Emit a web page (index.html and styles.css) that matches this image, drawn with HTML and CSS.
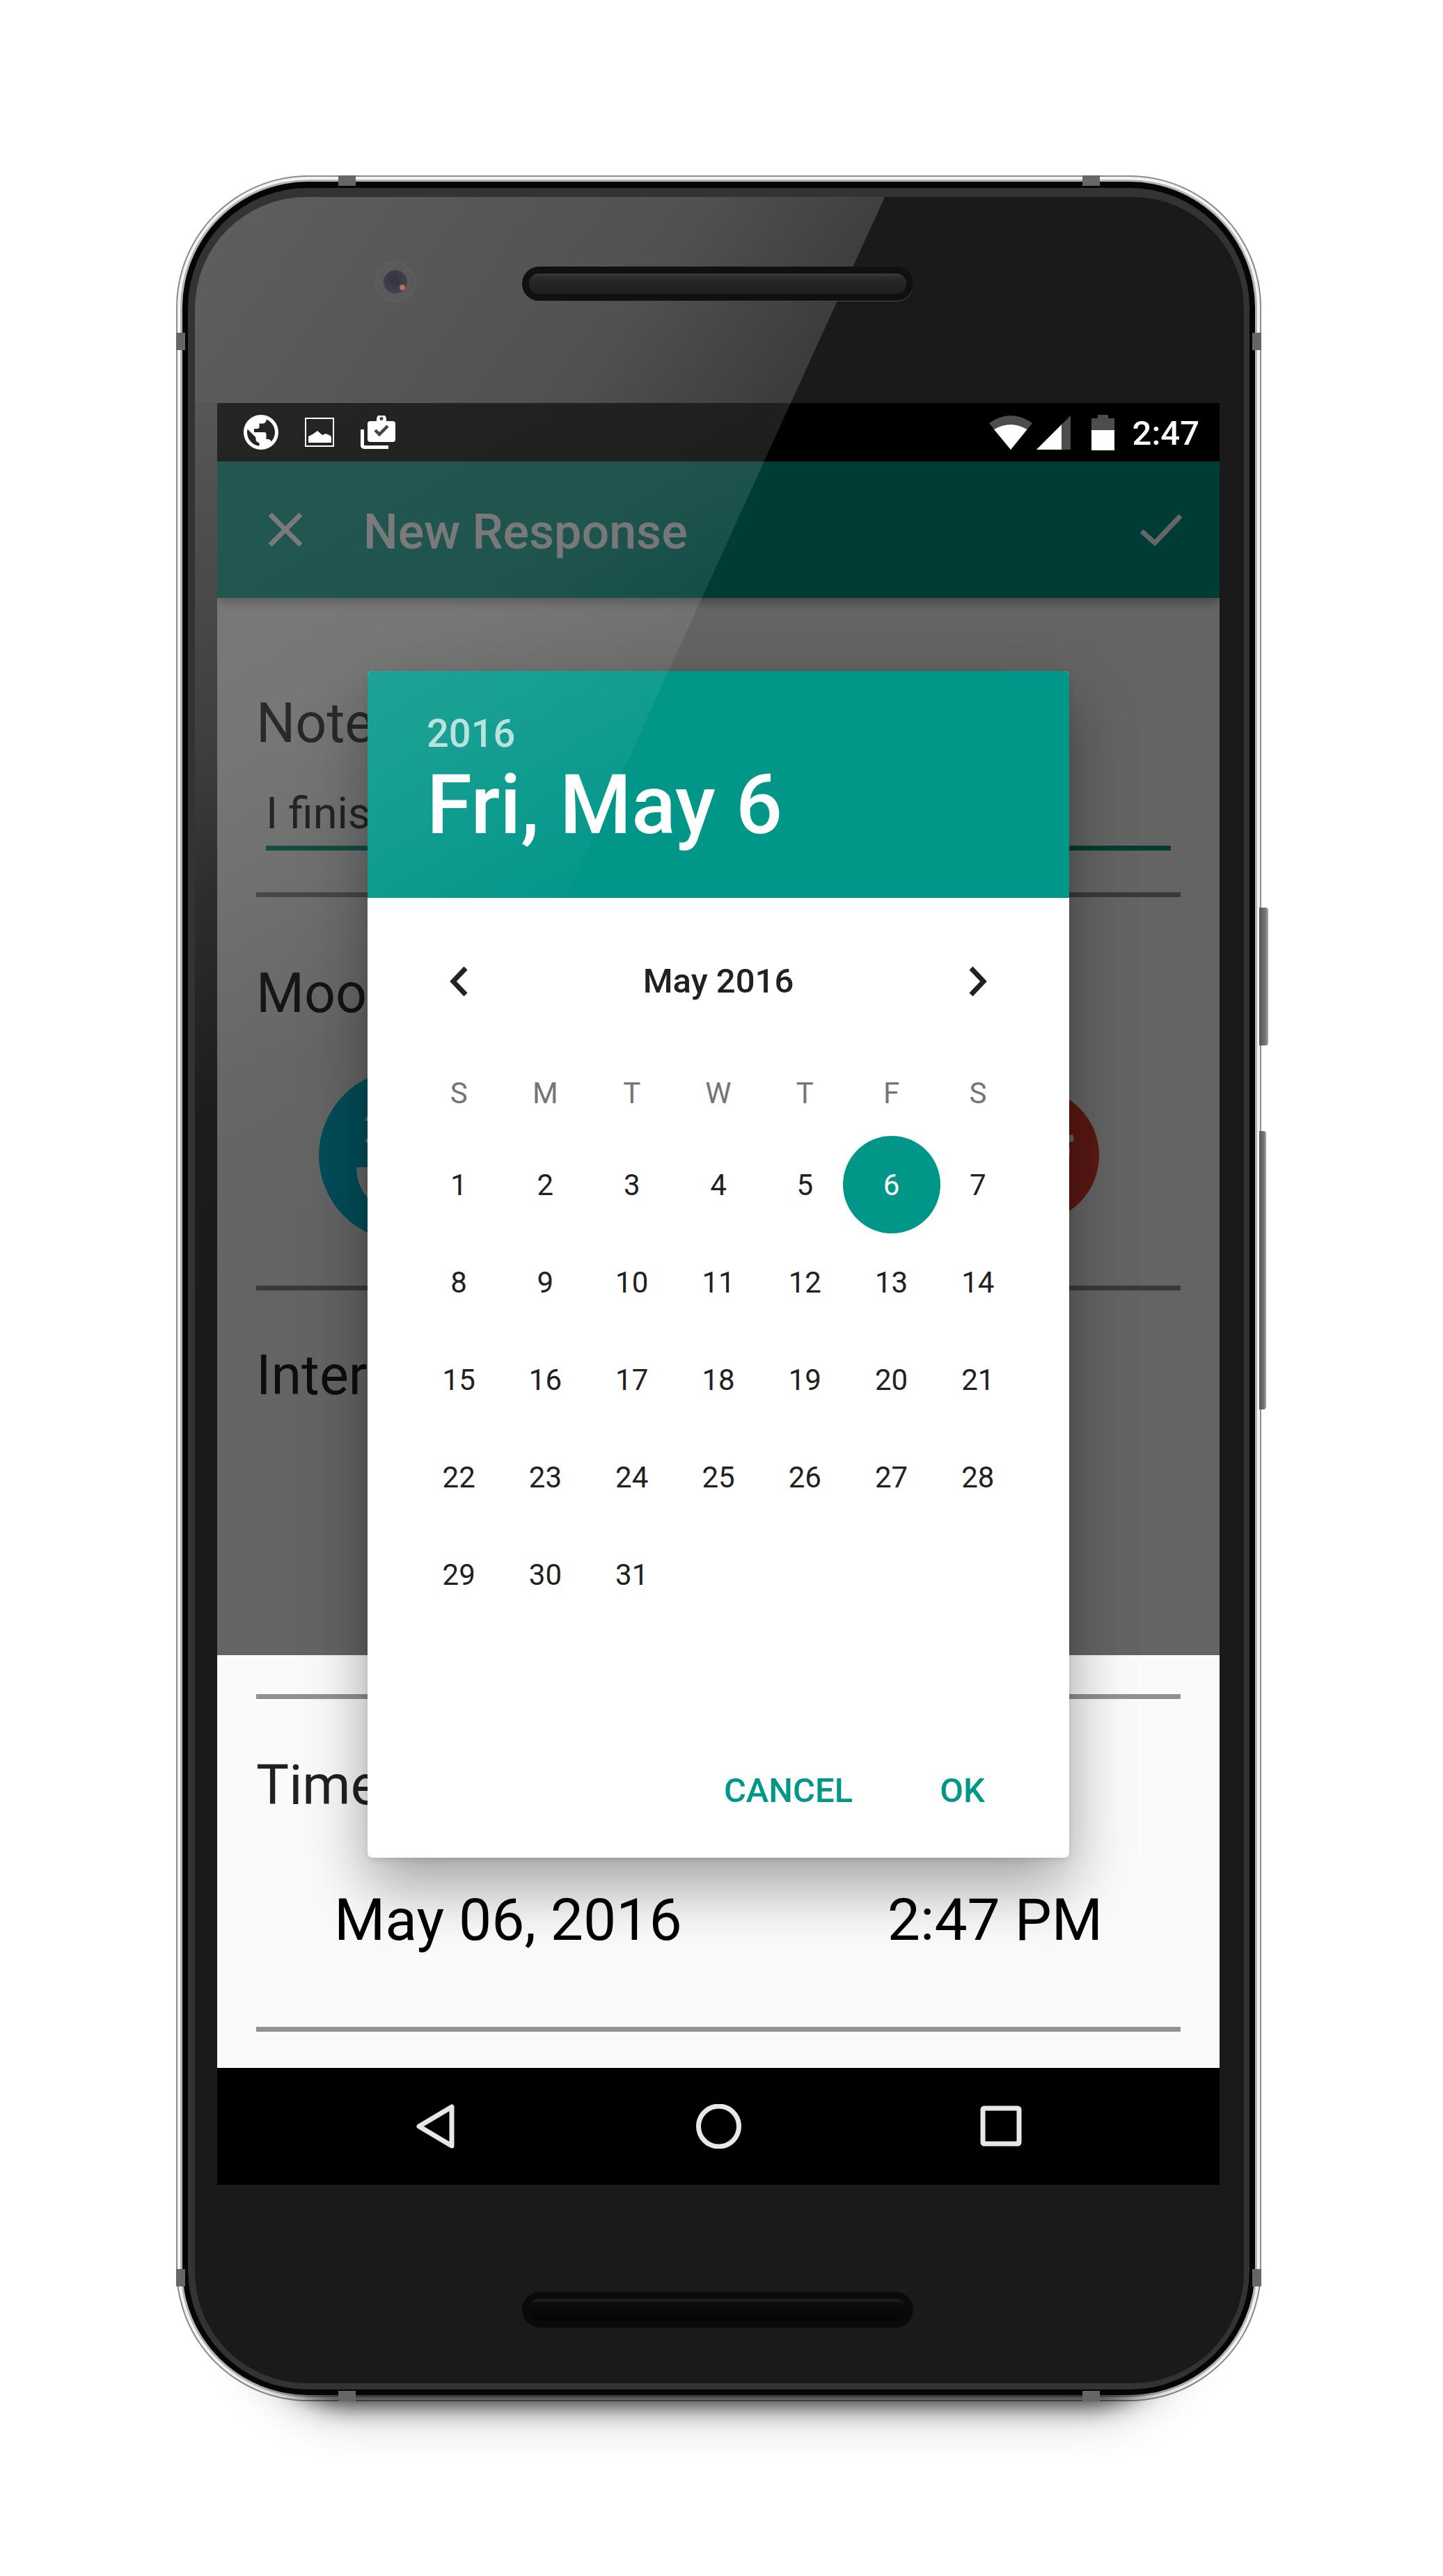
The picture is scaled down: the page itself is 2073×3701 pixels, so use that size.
FILE: index.html
```html
<!DOCTYPE html>
<html lang="en">
<head>
  <meta charset="UTF-8">
  <title>New Response</title>
  <link rel="stylesheet" href="styles.css">
</head>
<body>

  <div class="phone">
    <div class="phone-shadow"></div>
    <div class="btn-power"></div>
    <div class="btn-volume"></div>
    <div class="band band-top band-l"></div>
    <div class="band band-top band-r"></div>
    <div class="band band-bottom band-l"></div>
    <div class="band band-bottom band-r"></div>
    <div class="band-side band-side-top band-l2"></div>
    <div class="band-side band-side-top band-r2"></div>
    <div class="band-side band-side-bottom band-l2"></div>
    <div class="band-side band-side-bottom band-r2"></div>

    <div class="rim">
      <div class="edge">
        <div class="glass">
          <div class="wash-glass"></div>
          <div class="wash-strip"></div>
          <div class="camera"><div class="lens"><div class="glint"></div></div></div>
          <div class="speaker speaker-top"><div class="slot"></div></div>

          <div class="screen">
            <div class="statusbar">
              <div class="status-left">
                <svg class="ic-globe" viewBox="0 0 24 24"><path fill="#fff" d="M12 2C6.48 2 2 6.48 2 12s4.48 10 10 10 10-4.48 10-10S17.52 2 12 2zm-1 17.93c-3.95-.49-7-3.85-7-7.93 0-.62.08-1.21.21-1.79L9 15v1c0 1.1.9 2 2 2v1.93zm6.9-2.54c-.26-.81-1-1.39-1.9-1.39h-1v-3c0-.55-.45-1-1-1H8v-2h2c.55 0 1-.45 1-1V7h2c1.1 0 2-.9 2-2v-.41c2.93 1.19 5 4.06 5 7.41 0 2.08-.8 3.97-2.1 5.39z"/></svg>
                <svg class="ic-image" viewBox="0 0 42 42"><rect x="1" y="1" width="40" height="40" fill="none" stroke="#fff" stroke-width="2"/><path fill="#fff" d="M5 36V27l6-3 7-5 7 6 5-2 7 3 1 3v7z"/></svg>
                <svg class="ic-case" viewBox="0 0 50 48">
                  <path fill="none" stroke="#fff" stroke-width="5" d="M2.5 20v23a2.5 2.5 0 0 0 2.5 2.5h35"/>
                  <path fill="#fff" d="M23 8V5a6 6 0 0 1 14 0v3h9a4 4 0 0 1 4 4v22a4 4 0 0 1-4 4H14a4 4 0 0 1-4-4V12a4 4 0 0 1 4-4z"/>
                  <circle cx="30" cy="4.5" r="2.5" fill="#262626"/>
                  <path fill="none" stroke="#262626" stroke-width="4.5" d="M21 21l6 6 12-12"/>
                </svg>
              </div>
              <div class="status-right">
                <svg class="ic-wifi" viewBox="0 0 62 49"><path fill="#4d4d4d" d="M0 11Q31-11 62 11L31 49z"/><path fill="#fff" d="M7 20Q31 6 54.500 20L31 49z"/></svg>
                <svg class="ic-signal" viewBox="0 0 49 49"><path fill="#4d4d4d" d="M0 49L49 0v49z"/><path fill="#fff" d="M0 49L36 13v36z"/></svg>
                <svg class="ic-battery" viewBox="0 0 33 51"><path fill="#4d4d4d" d="M9 0h15v5h9v17H0V5h9z"/><path fill="#fff" d="M0 22h33v29H0z"/></svg>
                <span class="clock">2:47</span>
              </div>
            </div>

            <div class="appbar">
              <svg class="ic-close" viewBox="0 0 48 48"><path fill="none" stroke="#fff" stroke-width="7" d="M2 2l44 44M46 2L2 46"/></svg>
              <span class="appbar-title">New Response</span>
              <svg class="ic-done" viewBox="0 0 61 46"><path fill="none" stroke="#fff" stroke-width="7" d="M2 25l19 17L58 3"/></svg>
            </div>

            <div class="form">
              <div class="label label-note">Note</div>
              <div class="input-text">I finis</div>
              <div class="input-line"></div>
              <div class="rule rule-1"></div>

              <div class="label label-mood">Mood</div>
              <div class="moods">
                <svg class="mood-happy" viewBox="0 0 246 246">
                  <circle cx="123" cy="123" r="123" fill="#00bedc"/>
                  <path fill="#fff" d="M54 140h138a69 69 0 0 1-138 0z"/>
                  <path fill="#fff" d="M72 62l-6 11 6 1zM72 98l-6 2 6 9z"/>
                </svg>
                <svg class="mood-sad" viewBox="0 0 192 192">
                  <circle cx="96" cy="96" r="96" fill="#e03c2e"/>
                  <path fill="#fff" d="M145 68l9-2 2 9-11 3zM145 86h5v7h-5z"/>
                </svg>
              </div>
              <div class="rule rule-2"></div>

              <div class="label label-inter">Inter</div>
              <div class="rule rule-3"></div>

              <div class="label label-time">Time</div>
              <div class="datetime">
                <span>May 06, 2016</span>
                <span>2:47 PM</span>
              </div>
              <div class="rule rule-4"></div>
            </div>

            <div class="navbar">
              <svg class="ic-nav" viewBox="0 0 65 64"><path fill="none" stroke="#e8e8e8" stroke-width="7" stroke-linejoin="round" d="M53 4v56L6 32z"/></svg>
              <svg class="ic-nav" viewBox="0 0 65 64"><circle cx="32.500" cy="32" r="29" fill="none" stroke="#e8e8e8" stroke-width="7"/></svg>
              <svg class="ic-nav ic-nav-square" viewBox="0 0 65 64"><rect x="6" y="6" width="52" height="51" rx="2" fill="none" stroke="#e8e8e8" stroke-width="7"/></svg>
            </div>

            <div class="scrim"></div>

            <div class="dialog">
              <div class="dialog-head">
                <div class="head-year">2016</div>
                <div class="head-date">Fri, May 6</div>
              </div>
              <div class="cal">
                <div class="cal-month">
                  <svg class="chevron" viewBox="0 0 30 44"><path fill="none" stroke="#212121" stroke-width="7" d="M25 3L7 22l18 19"/></svg>
                  <span class="month-name">May 2016</span>
                  <svg class="chevron" viewBox="0 0 30 44"><path fill="none" stroke="#212121" stroke-width="7" d="M5 3l18 19L5 41"/></svg>
                </div>
                <div class="cal-week">
                  <span>S</span><span>M</span><span>T</span><span>W</span><span>T</span><span>F</span><span>S</span>
                </div>
                <div class="cal-days">
                  <span class="day">1</span><span class="day">2</span><span class="day">3</span><span class="day">4</span><span class="day">5</span><span class="day"><b class="day-on">6</b></span><span class="day">7</span>
                  <span class="day">8</span><span class="day">9</span><span class="day">10</span><span class="day">11</span><span class="day">12</span><span class="day">13</span><span class="day">14</span>
                  <span class="day">15</span><span class="day">16</span><span class="day">17</span><span class="day">18</span><span class="day">19</span><span class="day">20</span><span class="day">21</span>
                  <span class="day">22</span><span class="day">23</span><span class="day">24</span><span class="day">25</span><span class="day">26</span><span class="day">27</span><span class="day">28</span>
                  <span class="day">29</span><span class="day">30</span><span class="day">31</span>
                </div>
              </div>
              <div class="dialog-actions">
                <span>CANCEL</span>
                <span>OK</span>
              </div>
            </div>
          </div>

          <div class="speaker speaker-bottom"><div class="slot"></div></div>
          <div class="wash-screen"></div>
        </div>
      </div>
    </div>
  </div>

</body>
</html>
```

FILE: styles.css
```css
body {
  margin: 0;
  height: 3701px;
  overflow: hidden;
  background: #fff;
  font-family: Roboto, "Liberation Sans", sans-serif;
}

/* device */
.phone {
  position: relative;
  isolation: isolate;
  width: 1559px;
  height: 3198px;
  margin: 0 0 0 253px;
  top: 252px;
  border-radius: 190px;
  background: #b5b5b5;
  box-shadow: inset 0 0 0 2px #8c8c8c, inset 0 0 0 6px #f4f4f4;
  padding: 9px;
  box-sizing: border-box;
}
.phone-shadow {
  position: absolute;
  z-index: -1;
  left: 130px;
  right: 130px;
  bottom: 12px;
  height: 240px;
  border-radius: 120px;
  background: #000;
  box-shadow: 0 6px 34px 12px rgba(0,0,0,0.8), 0 4px 60px 44px rgba(0,0,0,0.13);
}
.rim {
  height: 100%;
  border-radius: 181px;
  background: #050505;
  padding: 9px 8px 8px 8px;
  box-sizing: border-box;
}
.edge {
  height: 100%;
  border-radius: 172px;
  background: #333;
  padding: 13px 8px 9px 10px;
  box-sizing: border-box;
}
.glass {
  position: relative;
  height: 100%;
  border-radius: 160px;
  background: #1a1a1a;
  overflow: hidden;
}
.wash-glass, .wash-screen {
  position: absolute;
  top: 0;
  left: 0;
  width: 1000px;
  height: 2180px;
}
.wash-glass {
  background: linear-gradient(125deg, rgba(255,255,255,0.3) 0, rgba(255,255,255,0.24) 600px, rgba(255,255,255,0.14) 880px);
  clip-path: polygon(0 0, 991px 0, 856px 296px, 0 296px);
}
.wash-strip {
  position: absolute;
  top: 296px;
  left: 0;
  width: 32px;
  height: 700px;
  background: linear-gradient(rgba(255,255,255,0.14), rgba(255,255,255,0));
}
.wash-screen {
  background: linear-gradient(150deg, rgba(255,255,255,0.16) 0, rgba(255,255,255,0.12) 700px, rgba(255,255,255,0.09) 850px, rgba(255,255,255,0.05) 1000px, rgba(255,255,255,0.01) 1150px, rgba(255,255,255,0) 1400px);
  clip-path: polygon(0 296px, 856px 296px, 35px 2097px, 0 2174px);
}
.camera {
  position: absolute;
  left: 259px;
  top: 93px;
  width: 58px;
  height: 58px;
  border-radius: 50%;
  background: #5a5a5a;
  border: 1px solid #666;
  box-sizing: border-box;
  display: flex;
  align-items: center;
  justify-content: center;
}
.lens {
  position: relative;
  width: 34px;
  height: 34px;
  border-radius: 50%;
  background: radial-gradient(circle at 45% 40%, #33313f 0, #45424f 70%, #5f5c66 100%);
}
.glint {
  position: absolute;
  right: 3px;
  bottom: 5px;
  width: 8px;
  height: 8px;
  border-radius: 50%;
  background: #b5705f;
}
.speaker {
  position: relative;
  width: 562px;
  margin-left: 470px;
  background: #101010;
  border-radius: 26px;
  box-sizing: border-box;
  padding: 10px;
  box-shadow: 0 1px 0 #4a4a4a;
}
.speaker-top {
  height: 49px;
  margin-top: 100px;
}
.speaker-bottom {
  height: 51px;
  margin-top: 154px;
  background: #0a0a0a;
  box-shadow: none;
}
.slot {
  height: 100%;
  border-radius: 14px;
  background: linear-gradient(#3c3c3c 0, #2a2a2a 20%, #1e1e1e 100%);
}
.speaker-bottom .slot {
  background: linear-gradient(#242424 0, #0c0c0c 20%, #050505 100%);
}

/* side buttons and antenna bands */
.btn-power, .btn-volume {
  position: absolute;
  z-index: -1;
  background: linear-gradient(90deg, #555, #777 70%, #aaa);
  border-radius: 0 4px 4px 0;
}
.btn-power {
  left: 1556px;
  top: 1052px;
  width: 13px;
  height: 198px;
}
.btn-volume {
  left: 1556px;
  top: 1373px;
  width: 10px;
  height: 400px;
}
.band, .band-side {
  position: absolute;
  z-index: 1;
  background: #666;
}
.band {
  width: 25px;
  height: 15px;
}
.band-top { top: 0; }
.band-bottom { bottom: 0; }
.band-l { left: 233px; }
.band-r { right: 232px; }
.band-side {
  width: 13px;
  height: 25px;
}
.band-side-top { top: 226px; }
.band-side-bottom { bottom: 165px; }
.band-l2 { left: 0; }
.band-r2 { right: 0; }

/* screen */
.screen {
  position: relative;
  display: flex;
  flex-direction: column;
  width: 1440px;
  height: 2560px;
  margin: 147px 0 0 32px;
  background: #fafafa;
  overflow: hidden;
}
.statusbar {
  display: flex;
  justify-content: space-between;
  align-items: center;
  height: 84px;
  padding: 0 29px 0 33px;
  background: #000;
  flex: none;
}
.status-left, .status-right {
  display: flex;
  align-items: center;
}
.ic-globe { width: 60px; height: 60px; }
.ic-image { width: 42px; height: 42px; margin-left: 33px; }
.ic-case { width: 50px; height: 48px; margin-left: 38px; }
.ic-wifi { width: 62px; height: 49px; }
.ic-signal { width: 49px; height: 49px; margin-left: 6px; }
.ic-battery { width: 33px; height: 51px; margin-left: 30px; }
.clock {
  margin-left: 26px;
  padding-top: 3px;
  color: #fff;
  font-size: 49px;
  line-height: 60px;
  font-weight: 500;
}

.appbar {
  display: flex;
  align-items: center;
  height: 196px;
  padding: 0 53px 0 74px;
  background: #009688;
  box-shadow: 0 6px 14px rgba(0,0,0,0.3);
  flex: none;
  position: relative;
}
.ic-close { width: 48px; height: 48px; }
.appbar-title {
  margin-left: 88px;
  color: #fff;
  font-size: 70px;
  line-height: 84px;
  font-weight: 500;
  padding-top: 6px;
  flex: 1;
}
.ic-done { width: 61px; height: 46px; }

.form {
  flex: 1;
  padding: 0 56px;
}
.label {
  color: #212121;
  font-size: 79px;
  line-height: 100px;
}
.label-note { margin-top: 130px; }
.label-mood { margin-top: 88px; }
.label-inter { margin-top: 72px; }
.label-time { margin-top: 74px; }
.input-text {
  margin: 38px 0 0 14px;
  color: #212121;
  font-size: 63px;
  line-height: 84px;
}
.input-line {
  height: 7px;
  margin: 4px 14px 0 14px;
  background: #009688;
}
.rule {
  height: 7px;
  background: #919191;
}
.rule-1 { margin-top: 60px; }
.rule-2 { margin-top: 64px; }
.rule-3 { margin-top: 408px; }
.rule-4 { margin-top: 98px; }
.moods {
  display: flex;
  justify-content: space-between;
  align-items: center;
  height: 246px;
  margin: 60px 117px 0 90px;
}
.mood-happy { width: 246px; height: 246px; }
.mood-sad { width: 192px; height: 192px; }
.datetime {
  display: flex;
  justify-content: space-between;
  margin-top: 89px;
  padding: 0 112px 0 112px;
  color: #000;
  font-size: 84px;
  line-height: 110px;
}

.navbar {
  display: flex;
  justify-content: center;
  align-items: center;
  gap: 339px;
  height: 168px;
  background: #000;
  flex: none;
}
.ic-nav { width: 65px; height: 64px; }
.ic-nav-square { position: relative; left: 2px; }

.scrim {
  position: absolute;
  top: 84px;
  left: 0;
  right: 0;
  height: 1715px;
  background: rgba(0,0,0,0.6);
}

/* date picker */
.dialog {
  position: absolute;
  left: 216px;
  top: 385px;
  width: 1008px;
  background: #fff;
  border-radius: 7px;
  box-shadow: 0 40px 90px rgba(0,0,0,0.36), 0 4px 10px rgba(0,0,0,0.1);
}
.dialog-head {
  height: 326px;
  padding: 60px 0 0 85px;
  box-sizing: border-box;
  background: #009688;
  border-radius: 7px 7px 0 0;
  color: #fff;
}
.head-year {
  font-size: 56px;
  line-height: 60px;
  font-weight: 500;
  color: rgba(255,255,255,0.7);
}
.head-date {
  font-size: 118px;
  line-height: 147px;
  font-weight: 500;
}
.cal {
  width: 870px;
  margin: 0 0 0 69px;
}
.cal-month {
  display: grid;
  grid-template-columns: repeat(7, minmax(0, 1fr));
  align-items: center;
  justify-items: center;
  height: 70px;
  margin-top: 85px;
}
.chevron { width: 30px; height: 44px; }
.month-name {
  grid-column: span 5;
  color: #212121;
  font-size: 49px;
  line-height: 70px;
  font-weight: 500;
}
.cal-week {
  display: grid;
  grid-template-columns: repeat(7, minmax(0, 1fr));
  justify-items: center;
  margin-top: 96px;
  color: #757575;
  font-size: 42px;
  line-height: 60px;
}
.cal-days {
  display: grid;
  grid-template-columns: repeat(7, minmax(0, 1fr));
  grid-auto-rows: 140px;
  height: 700px;
  margin-top: 31px;
  color: #212121;
  font-size: 42px;
}
.day {
  display: flex;
  align-items: center;
  justify-content: center;
}
.day-on {
  display: flex;
  flex: none;
  align-items: center;
  justify-content: center;
  width: 140px;
  height: 140px;
  border-radius: 50%;
  background: #009688;
  color: #fff;
  font-weight: 400;
}
.dialog-actions {
  display: flex;
  justify-content: flex-end;
  gap: 125px;
  margin-top: 206px;
  padding: 0 121px 61px 0;
  color: #009688;
  font-size: 49px;
  line-height: 70px;
  font-weight: 500;
}
```
